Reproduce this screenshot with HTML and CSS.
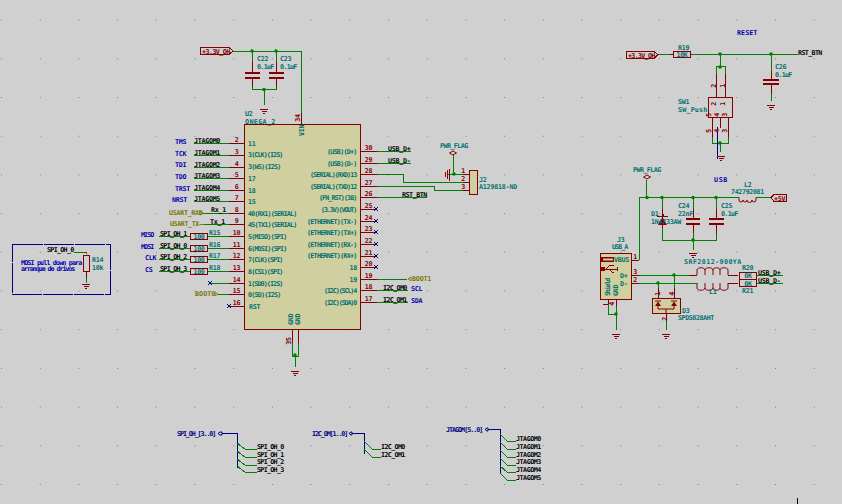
FILE: index.html
```html
<!DOCTYPE html>
<html>

<head>
  <meta name="viewport" content="width=device-width,initial-scale=1">
  <link rel="stylesheet" href="styles.css">
</head>

<body>
  <svg class="sheet" width="842" height="504" viewBox="0 0 842 504">
    <defs>
      <pattern id="grid" x="1" y="19.6" width="38.7" height="38.7" patternUnits="userSpaceOnUse">
        <rect class="griddot" width="1.4" height="1.4"></rect>
      </pattern>
      <g id="gnd">
        <path class="pin" d="M-4 0H4M-2.5 2H2.5M-1 4H1"></path>
      </g>
      <g id="dot">
        <circle class="junction" r="1.8"></circle>
      </g>
      <g id="nc">
        <path class="nc" d="M-2 -2L2 2M-2 2L2 -2"></path>
      </g>
      <g id="flag">
        <path class="pin-fine" d="M0 -2L3.5 0L0 2L-3.5 0Z"></path>
      </g>
    </defs>

    <rect width="842" height="504" fill="url(#grid)"></rect>

    <!-- body fills -->
    <rect class="part" x="244.5" y="124.5" width="116" height="205"></rect>
    <rect class="part" x="469.5" y="170.5" width="8" height="24"></rect>
    <rect class="part" x="600.5" y="253.5" width="31" height="46"></rect>
    <rect class="part" x="652.5" y="298.5" width="28" height="15"></rect>

    <!-- wires -->
    <path class="wire" d="
      M233 51H301V113M252 51V62M276 51V62M252 87V89.5H276V87M264 89.5V105
      M194 143H229M194 155H229M194 167H229M194 178H229M194 190H229M194 201H229
      M203 213H229M203 224H229M159 236H190M207 236H229M159 248H190M207 248H229
      M159 259H190M207 259H229M159 271H190M207 271H229M210 283H229M218 294H229
      M292 343V356H298V343M295 356V367
      M377 151H411M377 163H411M377 174H403V182H463M377 186H434V190H463M377 197H427
      M377 279H407M377 290H408M377 302H408
      M453 155V174M448 174H463
      M658 54H670M690 54H798M720 54V66M716 66H725M716 66V74M725 66V74
      M712 137V143H728V137M720 143V152M771 54V71M771 94V101
      M646.5 180V197.5M639 260V197.5H739M756 197.5H771M662 197.5V209M693 197.5V209M716 197.5V209
      M662 228V240H716V233M693 233V240M693 240V250
      M639 275H689M639 283H697M658 283V288M674 275V288M666 321V330
      M616 306V330M608 304V314H616M756 275H783M756 283H783
      M86 252H74M86 252V254M86 278V283"></path>

    <!-- pins and outlines -->
    <path class="pin" d="
      M229 143H244M229 155H244M229 167H244M229 178H244M229 190H244M229 201H244M229 213H244M229 224H244
      M229 236H244M229 248H244M229 259H244M229 271H244M229 283H244M229 294H244M229 306H244
      M360 151H377M360 163H377M360 174H377M360 186H377M360 197H377M360 209H377M360 221H377M360 232H377
      M360 244H377M360 256H377M360 267H377M360 279H377M360 290H377M360 302H377
      M301 113V124M292 329V343M298 329V343M252 62V72M276 62V72M252 77V87M276 77V87
      M463 174.5H469M463 182.5H469M463 190.5H469
      M670 54H673M716 74V97M725 74V97M712 117V137M720 117V128M728 117V137
      M771 71V79M771 83V94
      M693 209V218M693 223V233M716 209V218M716 223V233M662 209V228
      M631 260H639M631 275H639M631 283H639M689 275H697M728 275H738M728 283H738
      M658 288V298M674 288V298M666 313V321M616 299V306M603 304H608M608 299V304
      M86 271V278"></path>
    <path class="plate" d="M245 73H260M245 77.5H260M269 73H284M269 77.5H284M763 79.5H779M763 83.5H779M686 218.5H700M686 223.5H700M709 218.5H724M709 223.5H724"></path>

    <g class="box">
      <rect x="244.5" y="124.5" width="116" height="205"></rect>
      <rect x="469.5" y="170.5" width="8" height="24"></rect>
      <rect x="600.5" y="253.5" width="31" height="46"></rect>
      <rect x="652.5" y="298.5" width="28" height="15"></rect>
      <rect x="708.5" y="97.5" width="24" height="20"></rect>
      <rect x="190.5" y="233.5" width="17" height="6"></rect>
      <rect x="190.5" y="245.5" width="17" height="6"></rect>
      <rect x="190.5" y="256.5" width="17" height="6"></rect>
      <rect x="190.5" y="268.5" width="17" height="6"></rect>
      <rect x="673.5" y="51.5" width="17" height="6"></rect>
      <rect x="83.5" y="255.5" width="6" height="16"></rect>
      <rect x="739.5" y="272.5" width="17" height="7"></rect>
      <rect x="739.5" y="279.5" width="17" height="7"></rect>
      <path d="M200 47.5H229L233 51L229 54.5H200Z"></path>
      <path d="M626 51.5H654L658 54.5L654 58.5H626Z"></path>
      <path d="M771 197.5L774 194.5H786V201.5H774Z"></path>
    </g>

    <!-- inductors -->
    <path class="pin-fine" d="M739 197.5V200A2 2 0 0 0 743 200A2 2 0 0 0 747 200A2 2 0 0 0 752 200A2 2 0 0 0 756 200V197.5"></path>
    <path class="pin-fine" d="M697 275V270C697 267 705 267 705 270V275M705 270C705 267 713 267 713 270V275M713 270C713 267 720 267 720 270V275M720 270C720 267 728 267 728 270V275"></path>
    <path class="pin-fine" d="M697 283V288C697 291 705 291 705 288V283M705 288C705 291 713 291 713 288V283M713 288C713 291 720 291 720 288V283M720 288C720 291 728 291 728 288V283"></path>

    <!-- diodes -->
    <path class="solid" d="M658 225H667L662.5 217Z"></path>
    <path class="pin" d="M657 216H668M663 214V216"></path>
    <path class="solid" d="M655 306H661L658 301.5ZM671 306H677L674 301.5Z"></path>
    <path class="pin-fine" d="M655 301H661M671 301H677M658 306V309H674V306M666 309V313"></path>

    <!-- usb socket -->
    <rect class="solid" x="601" y="257" width="13" height="5"></rect>
    <rect class="part" x="603" y="258.5" width="10" height="2"></rect>
    <path class="pin" d="M602 269H617M606 269L610 265H614M609 269L612 272H614M617 267V271"></path>
    <rect class="solid" x="601" y="267" width="4" height="4"></rect>

    <!-- buses -->
    <path class="bus" d="M222 433.5H237V468M352 433.5H364V454M488 429.5H500V473M717 127V159"></path>
    <path class="wire" d="
      M237 443L245 449H257M237 451L245 457H257M237 459L245 465H257M237 466L245 472H257
      M364 441L372 449H381M364 449L372 457H381
      M500 434L507 441H516M500 442L507 449H516M500 450L507 457H516M500 458L507 465H516M500 466L507 472H516M500 473L507 480H516"></path>
    <rect class="note-frame" x="12.5" y="244.5" width="98" height="50"></rect>

    <!-- symbols -->
    <use href="#gnd" x="264" y="109"></use>
    <use href="#gnd" x="295" y="371"></use>
    <use href="#gnd" x="721" y="156"></use>
    <use href="#gnd" x="771" y="105"></use>
    <use href="#gnd" x="693" y="253"></use>
    <use href="#gnd" x="666" y="334"></use>
    <use href="#gnd" x="616" y="334"></use>
    <use href="#gnd" x="86" y="284"></use>
    <path class="pin" d="M445.5 172V177M447.5 170V179M449.5 168.5V180.5"></path>

    <use href="#dot" x="252" y="51"></use>
    <use href="#dot" x="276" y="51"></use>
    <use href="#dot" x="264" y="89.5"></use>
    <use href="#dot" x="295" y="355"></use>
    <use href="#dot" x="454" y="174"></use>
    <use href="#dot" x="720" y="54"></use>
    <use href="#dot" x="771" y="54"></use>
    <use href="#dot" x="720" y="67"></use>
    <use href="#dot" x="720" y="143"></use>
    <use href="#dot" x="647" y="197.5"></use>
    <use href="#dot" x="662" y="197.5"></use>
    <use href="#dot" x="693" y="197.5"></use>
    <use href="#dot" x="716" y="197.5"></use>
    <use href="#dot" x="693" y="240"></use>
    <use href="#dot" x="674" y="275"></use>
    <use href="#dot" x="658" y="283"></use>
    <use href="#dot" x="616" y="314"></use>

    <use href="#nc" x="210" y="283"></use>
    <use href="#nc" x="229" y="306"></use>
    <use href="#nc" x="376" y="209"></use>
    <use href="#nc" x="376" y="221"></use>
    <use href="#nc" x="376" y="232"></use>
    <use href="#nc" x="376" y="244"></use>
    <use href="#nc" x="376" y="256"></use>
    <use href="#nc" x="376" y="267"></use>

    <use href="#flag" x="453" y="153"></use>
    <use href="#flag" x="647" y="177"></use>

    <path class="hier" d="M203 213L200 211V215ZM199.5 224.5H204M218 294L215 292V296ZM408 279L411 277V281Z"></path>
    <path class="busflag" d="M218 433.5L220 432H222V435H220ZM349 433.5L351 432H352V435H351ZM485 429.5L487 428H488V431H487Z"></path>

    <g class="t-part">
      <text x="245" y="115.5">U2</text>
      <text x="245" y="123.5" textLength="30">ONEGA_2</text>
      <text x="479" y="181.5">J2</text>
      <text x="479" y="189" textLength="38">A129818-ND</text>
      <text x="440" y="148" textLength="28">PWR_FLAG</text>
      <text x="633" y="171.5" textLength="28">PWR_FLAG</text>
      <text x="209" y="234.5">R15</text>
      <text x="209" y="246.5">R16</text>
      <text x="209" y="258">R17</text>
      <text x="209" y="269.5">R18</text>
      <text x="678" y="50">R19</text>
      <text x="678" y="103.5">SW1</text>
      <text x="678" y="111.5" textLength="29">SW_Push</text>
      <text x="775" y="69">C26</text>
      <text x="775" y="76.5" textLength="17">0.1uF</text>
      <text x="257" y="60.8">C22</text>
      <text x="257" y="68.5" textLength="17">0.1uF</text>
      <text x="280" y="60.8">C23</text>
      <text x="280" y="68.5" textLength="17">0.1uF</text>
      <text x="678" y="208">C24</text>
      <text x="678" y="215.5">22nF</text>
      <text x="721" y="208">C25</text>
      <text x="721" y="215.5" textLength="17">0.1uF</text>
      <text x="651" y="215.5">D1</text>
      <text x="651" y="224" textLength="30">1N4733AW</text>
      <text x="744" y="186.5">L2</text>
      <text x="731" y="194" textLength="33">742792081</text>
      <text x="617" y="241.5">J3</text>
      <text x="612" y="249" textLength="16">USB_A</text>
      <text x="684" y="263.5" textLength="57">SRF2012-900YA</text>
      <text x="742" y="269.5">R20</text>
      <text x="742" y="292.5">R21</text>
      <text x="709" y="293.5">L1</text>
      <text x="682" y="312.5">D3</text>
      <text x="678" y="320" textLength="36">SPD5028AHT</text>
      <text x="92" y="261.5">R14</text>
      <text x="92" y="269.5">10k</text>

      <text x="248" y="145.5">11</text>
      <text x="248" y="157" textLength="35">3(CLK)(I2S)</text>
      <text x="248" y="169" textLength="33">3(WS)(I2S)</text>
      <text x="248" y="180.5">17</text>
      <text x="248" y="192.5">18</text>
      <text x="248" y="203.5">15</text>
      <text x="248" y="215.5" textLength="49">40(RX1)(SERIAL)</text>
      <text x="248" y="226.5" textLength="49">45(TX1)(SERIAL)</text>
      <text x="248" y="238.5" textLength="39">5(MISO)(SPI)</text>
      <text x="248" y="250.5" textLength="39">6(MOSI)(SPI)</text>
      <text x="248" y="261.5" textLength="35">7(CLK)(SPI)</text>
      <text x="248" y="273.5" textLength="35">8(CS1)(SPI)</text>
      <text x="248" y="285.5" textLength="35">1(SD0)(I2S)</text>
      <text x="248" y="296.5" textLength="33">0(SD)(I2S)</text>
      <text x="249" y="308.5">RST</text>

      <text x="614" y="261.5" textLength="15">VBUS</text>
      <text x="620" y="277.5">D+</text>
      <text x="620" y="285.5">D-</text>
      <text transform="translate(610 296) rotate(-90)" textLength="18">Shield</text>
      <text transform="translate(618 296) rotate(-90)">GND</text>
      <text transform="translate(304 136) rotate(-90)">VIN</text>
      <text transform="translate(293 325) rotate(-90)">GND</text>
      <text transform="translate(300 325) rotate(-90)">GND</text>
    </g>

    <g class="t-part end">
      <text x="357" y="153.5" textLength="30">(USB)(D+)</text>
      <text x="357" y="165.5" textLength="30">(USB)(D-)</text>
      <text x="357" y="177" textLength="47">(SERIAL)(RXD)13</text>
      <text x="357" y="188.5" textLength="47">(SERIAL)(TXD)12</text>
      <text x="357" y="200" textLength="38">(FN_RST)(38)</text>
      <text x="357" y="211.5" textLength="36">(3.3V)(VOUT)</text>
      <text x="357" y="223.5" textLength="50">(ETHERNET)(TX-)</text>
      <text x="357" y="235" textLength="50">(ETHERNET)(TX+)</text>
      <text x="357" y="246.5" textLength="50">(ETHERNET)(RX-)</text>
      <text x="357" y="258" textLength="50">(ETHERNET)(RX+)</text>
      <text x="357" y="269.5">18</text>
      <text x="357" y="281.5">19</text>
      <text x="357" y="293" textLength="33">(I2C)(SCL)4</text>
      <text x="357" y="304.5" textLength="33">(I2C)(SDA)0</text>
    </g>

    <!-- pin numbers -->
    <g class="t-pin mid">
      <text x="236.5" y="142">2</text>
      <text x="236.5" y="154">3</text>
      <text x="236.5" y="166">4</text>
      <text x="236.5" y="177">5</text>
      <text x="236.5" y="189">6</text>
      <text x="236.5" y="200">7</text>
      <text x="236.5" y="212">8</text>
      <text x="236.5" y="223">9</text>
      <text x="236.5" y="235">10</text>
      <text x="236.5" y="247">11</text>
      <text x="236.5" y="258">12</text>
      <text x="236.5" y="270">13</text>
      <text x="236.5" y="282">14</text>
      <text x="236.5" y="293">15</text>
      <text x="236.5" y="305">16</text>
      <text x="368.5" y="150">30</text>
      <text x="368.5" y="162">29</text>
      <text x="368.5" y="173">28</text>
      <text x="368.5" y="185">27</text>
      <text x="368.5" y="196">26</text>
      <text x="368.5" y="208">25</text>
      <text x="368.5" y="220">24</text>
      <text x="368.5" y="231">23</text>
      <text x="368.5" y="243">22</text>
      <text x="368.5" y="255">21</text>
      <text x="368.5" y="266">20</text>
      <text x="368.5" y="278">19</text>
      <text x="368.5" y="289">18</text>
      <text x="368.5" y="301">17</text>
      <text x="463" y="173">1</text>
      <text x="463" y="181">2</text>
      <text x="463" y="189">3</text>
      <text x="635" y="259">1</text>
      <text x="635" y="274">3</text>
      <text x="635" y="282">2</text>
      <text x="199" y="238.5" class="t-res">100</text>
      <text x="199" y="250.5" class="t-res">100</text>
      <text x="199" y="261.5" class="t-res">100</text>
      <text x="199" y="273.5" class="t-res">100</text>
      <text x="682" y="56.5" class="t-res">10K</text>
      <text x="748" y="278" class="t-res">0K</text>
      <text x="748" y="285.5" class="t-res">0K</text>
      <text transform="translate(300 118) rotate(-90)">34</text>
      <text transform="translate(291 341) rotate(-90)">35</text>
      <text transform="translate(725 86) rotate(-90)">1</text>
      <text transform="translate(716 86) rotate(-90)">2</text>
      <text transform="translate(725 104) rotate(-90)">1</text>
      <text transform="translate(716 104) rotate(-90)">2</text>
      <text transform="translate(711 131) rotate(-90)">5</text>
      <text transform="translate(719 131) rotate(-90)">4</text>
      <text transform="translate(727 131) rotate(-90)">3</text>
      <text transform="translate(711 115) rotate(-90)">5</text>
      <text transform="translate(719 115) rotate(-90)">4</text>
      <text transform="translate(727 115) rotate(-90)">3</text>
      <text transform="translate(660 294) rotate(-90)">1</text>
      <text transform="translate(674 294) rotate(-90)">4</text>
      <text transform="translate(667 319) rotate(-90)">2</text>
      <text transform="translate(614 304) rotate(-90)">4</text>
      <text x="202" y="53.5" class="t-flag" textLength="28">+3.3V_OH</text>
      <text x="628" y="57.5" class="t-flag" textLength="27">+3.3V_OH</text>
      <text x="774" y="200.5" class="t-flag">+5V</text>
    </g>

    <!-- net labels -->
    <g class="t-net">
      <text x="194" y="142.5">JTAGOM0</text>
      <text x="194" y="154.5">JTAGOM1</text>
      <text x="194" y="166.5">JTAGOM2</text>
      <text x="194" y="177.5">JTAGOM3</text>
      <text x="194" y="189.5">JTAGOM4</text>
      <text x="194" y="200.5">JTAGOM5</text>
      <text x="211" y="212">Rx_1</text>
      <text x="210" y="223.5">Tx_1</text>
      <text x="160" y="236" textLength="27">SPI_OH_1</text>
      <text x="160" y="248" textLength="27">SPI_OH_0</text>
      <text x="160" y="259" textLength="27">SPI_OH_2</text>
      <text x="160" y="271" textLength="27">SPI_OH_3</text>
      <text x="388" y="151">USB_D+</text>
      <text x="388" y="163">USB_D-</text>
      <text x="402" y="197" textLength="25">RST_BTN</text>
      <text x="383" y="290" textLength="24">I2C_OM0</text>
      <text x="383" y="302" textLength="24">I2C_OM1</text>
      <text x="798" y="54.5" textLength="24">RST_BTN</text>
      <text x="758" y="274.5">USB_D+</text>
      <text x="758" y="282.5">USB_D-</text>
      <text x="47" y="251.5" textLength="27">SPI_OH_0</text>
      <text x="257" y="448.5" textLength="27">SPI_OH_0</text>
      <text x="257" y="456.5" textLength="27">SPI_OH_1</text>
      <text x="257" y="464" textLength="27">SPI_OH_2</text>
      <text x="257" y="471.5" textLength="27">SPI_OH_3</text>
      <text x="381" y="448.5" textLength="24">I2C_OM0</text>
      <text x="381" y="456.5" textLength="24">I2C_OM1</text>
      <text x="516" y="440.5" textLength="25">JTAGOM0</text>
      <text x="516" y="448.5" textLength="25">JTAGOM1</text>
      <text x="516" y="456.5" textLength="25">JTAGOM2</text>
      <text x="516" y="464" textLength="25">JTAGOM3</text>
      <text x="516" y="471.5" textLength="25">JTAGOM4</text>
      <text x="516" y="479.5" textLength="25">JTAGOM5</text>
    </g>

    <!-- notes -->
    <g class="t-note">
      <text x="175" y="143.5">TMS</text>
      <text x="175" y="155.5">TCK</text>
      <text x="175" y="167">TDI</text>
      <text x="175" y="178.5">TDO</text>
      <text x="175" y="190.5">TRST</text>
      <text x="172" y="201.5">NRST</text>
      <text x="141" y="236.5" textLength="13">MISO</text>
      <text x="141" y="248.5" textLength="13">MOSI</text>
      <text x="145" y="260">CLK</text>
      <text x="145" y="271.5">CS</text>
      <text x="411" y="290.5">SCL</text>
      <text x="411" y="302.5">SDA</text>
      <text x="737" y="34.5" textLength="20">RESET</text>
      <text x="714" y="181.5" textLength="13">USB</text>
      <text x="21" y="265" textLength="61">MOSI pull down para</text>
      <text x="21" y="271" textLength="54">arranque de drivos</text>
    </g>

    <g class="t-hier">
      <text x="169" y="215">USART_RXD</text>
      <text x="170" y="226" textLength="29">USART_TX</text>
      <text x="195" y="296" textLength="20">BOOT0</text>
      <text x="412" y="281" textLength="19">BOOT1</text>
    </g>

    <g class="t-bus">
      <text x="177" y="436" textLength="39">SPI_OH_[3..0]</text>
      <text x="312" y="435.5" textLength="36">I2C_OM[1..0]</text>
      <text x="446" y="432" textLength="37">JTAGOM[5..0]</text>
    </g>

    <path class="tick" d="M797.5 498V504"></path>
  </svg>
</body>

</html>
```

FILE: styles.css
```css
/* Sheet */

body {
  margin: 0;
  background-color: #d0d0d0;
}

.sheet {
  display: block;
  font-family: "DejaVu Sans Mono", "Liberation Mono", monospace;
  font-size: 6.7px;
  font-weight: bold;
  letter-spacing: -0.3px;
}

.griddot {
  fill: #7c7c7c;
  shape-rendering: crispEdges;
}

/* Lines */

.wire,
.pin,
.plate,
.bus,
.nc,
.note-frame,
.tick {
  fill: none;
  stroke-width: 1;
  shape-rendering: crispEdges;
}

.wire {
  stroke: #007f00;
}

.pin {
  stroke: #840000;
}

.pin-fine {
  fill: none;
  stroke: #840000;
  stroke-width: 1;
}

.plate {
  stroke: #840000;
  stroke-width: 2;
}

.bus,
.nc {
  stroke: #000084;
}

.tick {
  stroke: #000000;
}

.note-frame {
  stroke: #000084;
  stroke-dasharray: 30 1;
}

.junction {
  fill: #007f00;
}

.solid {
  fill: #840000;
}

.hier {
  fill: none;
  stroke: #848400;
}

.busflag {
  fill: none;
  stroke: #000084;
}

/* Part bodies */

.part {
  fill: #cfcf9f;
}

.box rect,
.box path {
  fill: none;
  stroke: #840000;
  stroke-width: 1;
  shape-rendering: crispEdges;
}

/* Text */

.t-part {
  fill: #007070;
}

.t-part.end {
  text-anchor: end;
}

.t-pin {
  fill: #840000;
}

.t-pin.mid {
  text-anchor: middle;
}

.t-res {
  fill: #007070;
}

.t-flag {
  fill: #840000;
  text-anchor: start;
}

.t-net {
  fill: #000000;
}

.t-note {
  fill: #0000b0;
}

.t-hier {
  fill: #787800;
}

.t-bus {
  fill: #000084;
}
```
